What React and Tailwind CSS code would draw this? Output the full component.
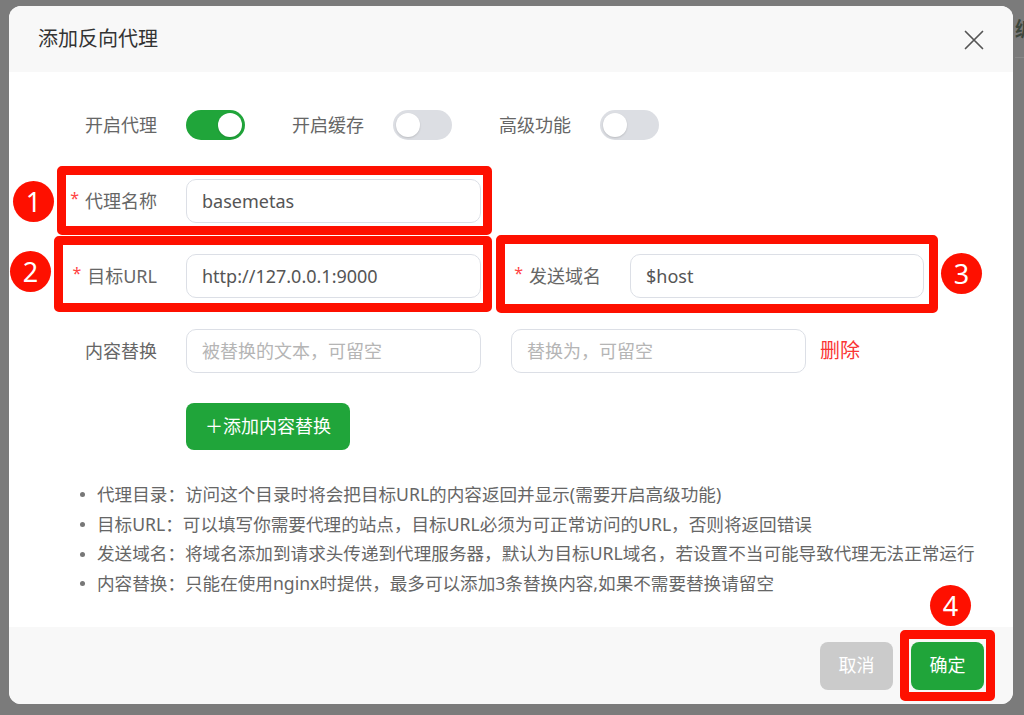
import { useState } from "react";

const FONT = { fontFamily: '"Noto Sans", "Noto Sans CJK SC", sans-serif' };

// Toggle switch
const Toggle = ({ on }) => (
  <div
    className={`w-[59px] h-[30px] rounded-full flex items-center px-[3px] ${
      on ? "bg-[#20a53a] justify-end" : "bg-[#dcdee3] justify-start"
    }`}
  >
    <div className="w-[24px] h-[24px] rounded-full bg-white shadow-[0_1px_2px_rgba(0,0,0,0.15)]" />
  </div>
);

const Label = ({ children, required }) => (
  <div className="w-[100px] flex justify-end items-center text-[18px] text-[#666]">
    {required && <span className="text-[#f44] text-[16px] mr-[6px] -mt-[6px]">*</span>}
    <span>{children}</span>
  </div>
);

const Input = ({ value, placeholder, width = "w-[295px]" }) => (
  <div
    className={`${width} h-[44px] rounded-[10px] border border-[#dcdfe6] flex items-center px-[15px] text-[18px] ${
      value ? "text-[#555]" : "text-[#b5b5b5]"
    }`}
  >
    {value || placeholder}
  </div>
);

// Annotation marker
const Badge = ({ n, className }) => (
  <div
    className={`absolute w-[41px] h-[41px] rounded-full bg-[#fe1000] text-white text-[27px] leading-none flex items-center justify-center ${className}`}
  >
    {n}
  </div>
);

const tips = [
  "代理目录：访问这个目录时将会把目标URL的内容返回并显示(需要开启高级功能)",
  "目标URL：可以填写你需要代理的站点，目标URL必须为可正常访问的URL，否则将返回错误",
  "发送域名：将域名添加到请求头传递到代理服务器，默认为目标URL域名，若设置不当可能导致代理无法正常运行",
  "内容替换：只能在使用nginx时提供，最多可以添加3条替换内容,如果不需要替换请留空",
];

export default function App() {
  const [toggles] = useState([
    { label: "开启代理", on: true },
    { label: "开启缓存", on: false },
    { label: "高级功能", on: false },
  ]);

  return (
    <div className="w-[1024px] h-[715px] overflow-hidden bg-[#7b7b7b] flex items-start pt-[6px] pl-[9px]" style={FONT}>
      {/* DIALOG */}
      <div className="relative shrink-0 w-[1004px] h-[698px] rounded-[12px] bg-white overflow-hidden flex flex-col">
        {/* HEADER */}
        <div className="h-[66px] bg-[#f8f8f8] flex items-center justify-between pl-[29px] pr-[29px]">
          <span className="text-[20px] text-[#333]">添加反向代理</span>
          <svg width="20" height="20" viewBox="0 0 20 20" className="mt-[1px]">
            <path d="M1.5 1.5 L18.5 18.5 M18.5 1.5 L1.5 18.5" stroke="#555" strokeWidth="1.7" strokeLinecap="round" />
          </svg>
        </div>

        {/* BODY */}
        <div className="flex-1 pl-[48px] pt-[31px]">
          {/* switches */}
          <div className="h-[44px] flex items-center">
            {toggles.map((t, i) => (
              <div key={t.label} className={`flex items-center ${i > 0 ? "ml-[47px]" : ""}`}>
                {i === 0 ? (
                  <Label>{t.label}</Label>
                ) : (
                  <span className="text-[18px] text-[#666]">{t.label}</span>
                )}
                <div className="ml-[29px]">
                  <Toggle on={t.on} />
                </div>
              </div>
            ))}
          </div>

          {/* name */}
          <div className="mt-[32px] flex items-center">
            <Label required>代理名称</Label>
            <div className="ml-[29px]">
              <Input value="basemetas" />
            </div>
          </div>

          {/* target + host */}
          <div className="mt-[31px] flex items-center">
            <Label required>目标URL</Label>
            <div className="ml-[29px]">
              <Input value="http://127.0.0.1:9000" />
            </div>
            <div className="ml-[20px]">
              <Label required>发送域名</Label>
            </div>
            <div className="ml-[29px]">
              <Input value="$host" width="w-[294px]" />
            </div>
          </div>

          {/* replace */}
          <div className="mt-[31px] flex items-center">
            <Label>内容替换</Label>
            <div className="ml-[29px]">
              <Input placeholder="被替换的文本，可留空" />
            </div>
            <div className="ml-[30px]">
              <Input placeholder="替换为，可留空" />
            </div>
            <span className="ml-[14px] text-[20px] text-[#fa3534]">删除</span>
          </div>

          <button className="mt-[30px] ml-[129px] w-[164px] h-[47px] rounded-[8px] bg-[#20a53a] text-white text-[18px] flex items-center justify-center">
            ＋添加内容替换
          </button>

          {/* tips */}
          <ul className="mt-[30px] ml-[23px] text-[17.6px] leading-[29.7px] text-[#666]">
            {tips.map((t) => (
              <li key={t} className="flex items-center whitespace-nowrap">
                <span className="w-[5px] h-[5px] rounded-full bg-[#777] mr-[12px]" />
                {t}
              </li>
            ))}
          </ul>
        </div>

        {/* FOOTER */}
        <div className="h-[77px] bg-[#f8f8f8] flex items-center justify-end gap-[18px] pr-[29px]">
          <button className="w-[73px] h-[48px] rounded-[8px] bg-[#cbcbcb] text-white text-[18px]">取消</button>
          <button className="w-[73px] h-[48px] rounded-[8px] bg-[#20a53a] text-white text-[18px]">确定</button>
        </div>

        {/* ANNOTATIONS */}
        <div className="absolute left-[48px] top-[160px] w-[435px] h-[69px] border-[9px] border-[#fe1000] rounded-[5px]" />
        <div className="absolute left-[45px] top-[230px] w-[438px] h-[76px] border-[9px] border-[#fe1000] rounded-[5px]" />
        <div className="absolute left-[487px] top-[229px] w-[442px] h-[78px] border-[9px] border-[#fe1000] rounded-[5px]" />
        <div className="absolute left-[891px] top-[624px] w-[95px] h-[71px] border-[9px] border-[#fe1000] rounded-[5px]" />
        <Badge n="1" className="left-[4px] top-[175px]" />
        <Badge n="2" className="left-[1px] top-[245px]" />
        <Badge n="3" className="left-[932px] top-[247px]" />
        <Badge n="4" className="left-[921px] top-[579px]" />
      </div>

      {/* page behind overlay */}
      <div className="shrink-0 ml-[2px] w-[20px] h-[52px] border-b border-[#888] pt-[14px] text-[20px] font-bold text-[#3c463c] leading-none">
        编
      </div>
    </div>
  );
}
